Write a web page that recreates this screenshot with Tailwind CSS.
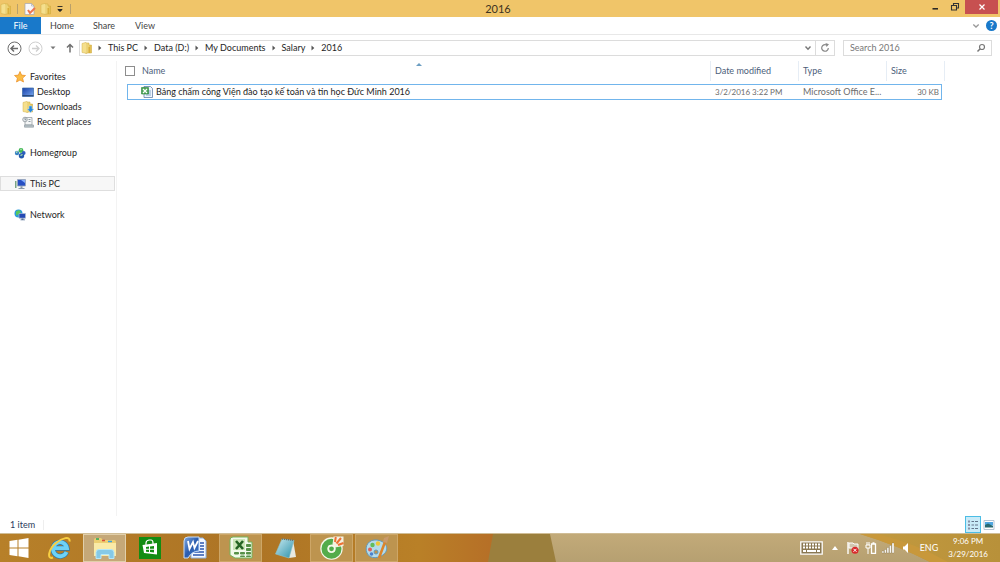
<!DOCTYPE html>
<html lang="en">
<head>
<meta charset="utf-8">
<meta name="viewport" content="width=device-width, initial-scale=1">
<title>2016</title>
<script src="https://cdn.jsdelivr.net/npm/@tailwindcss/browser@4"></script>
</head>
<body class="flex h-screen flex-col overflow-hidden bg-white font-[Lato,'Noto_Sans',sans-serif] text-[9px] leading-3 text-[#1e1e1e]">
<svg class="absolute size-0" aria-hidden="true">
  <defs>
    <linearGradient id="gold" x1="0" x2="1"><stop offset="0" stop-color="#fff2ae"/><stop offset="1" stop-color="#dfb844"/></linearGradient>
    <linearGradient id="screen" x1="0" y1="0" x2="1" y2="1"><stop offset="0" stop-color="#173fa9"/><stop offset="1" stop-color="#79a9ef"/></linearGradient>
    <linearGradient id="note" x1="0" y1="0" x2="1" y2="1"><stop offset="0" stop-color="#c8eaf0"/><stop offset="1" stop-color="#2c91aa"/></linearGradient>
    <linearGradient id="word" x1="0" y1="0" x2="1" y2="1"><stop offset="0" stop-color="#7fa8e0"/><stop offset=".5" stop-color="#2a5cae"/><stop offset="1" stop-color="#3f7ad0"/></linearGradient>
  </defs>
  <symbol id="folder" viewBox="0 0 12 12"><path d="M4 1h4v2h2.500v8H4z" fill="url(#gold)" stroke="#cfa83d" stroke-width=".5"/><path d="M1 1.500L4.500.500 6 1.500v10l-5-1z" fill="#f5df8d" stroke="#d3b04a" stroke-width=".5"/><path d="M7.500 5h1.500v6H7.500z" fill="#d9ae3b"/></symbol>
  <symbol id="crumb" viewBox="0 0 4 6"><path d="M.5.5L3.300 3 .5 5.500z" fill="#555"/></symbol>
</svg>

<header class="flex h-[17px] shrink-0 items-center justify-between bg-[#f0c569]">
  <div class="flex items-center">
    <svg class="size-3" role="img" aria-label="Folder"><use href="#folder"/></svg>
    <span class="ml-[5px] h-2.5 w-px bg-[#b9a06b]"></span>
    <button aria-label="Properties" class="ml-1.5"><svg class="size-3" viewBox="0 0 12 12"><path d="M1 .5h6.500L10 3v8.500H1z" fill="#f8f8fa" stroke="#a5a5ad" stroke-width=".7"/><path d="M7.500.5V3H10" fill="none" stroke="#a5a5ad" stroke-width=".6"/><path d="M4 7l2 3 5-5" fill="none" stroke="#ec7650" stroke-width="2"/></svg></button>
    <button aria-label="New folder" class="ml-1"><svg class="size-3"><use href="#folder"/></svg></button>
    <button aria-label="Customize toolbar" class="ml-1"><svg class="size-2" viewBox="0 0 8 8"><path d="M1.500 1.500h5M1.800 4.500h4.400L4 6.500z" fill="#222" stroke="#222" stroke-width=".9"/></svg></button>
    <span class="ml-1.5 h-2.5 w-px bg-[#b9a06b]"></span>
  </div>
  <h1 class="flex-1 text-center text-[11px] leading-4 text-[#3d3321]">2016</h1>
  <div class="flex h-full items-start pr-0.5">
    <button aria-label="Minimize" class="h-3.5 w-5"><svg class="mx-auto h-3.5 w-2" viewBox="0 0 8 14"><path d="M1.500 8.800h5.500" stroke="#222" stroke-width="1.500"/></svg></button>
    <button aria-label="Restore" class="h-3.5 w-5"><svg class="mx-auto h-3.5 w-2.5" viewBox="0 0 10 14"><path d="M3.500 5V3.500h5v4.500H7M1.500 5.500h5v4.500h-5z" fill="none" stroke="#333" stroke-width="1.100"/></svg></button>
    <button aria-label="Close" class="h-3.5 w-[33px] bg-[#c75050]"><svg class="mx-auto h-3.5 w-2.5" viewBox="0 0 10 14"><path d="M2.500 4.500l5 5m0-5l-5 5" stroke="#fff" stroke-width="1.200"/></svg></button>
  </div>
</header>

<nav aria-label="Ribbon" class="flex h-[18px] shrink-0 items-center border-b border-[#e8e8e8] text-[#444]">
  <button class="h-[17px] w-[41px] bg-[#1979ca] text-white">File</button>
  <button class="w-[42px]">Home</button>
  <button class="w-[42px]">Share</button>
  <button class="w-10">View</button>
  <button aria-label="Expand ribbon" class="ml-auto"><svg class="size-2" viewBox="0 0 8 8"><path d="M1.300 2.500L4 5l2.700-2.500" fill="none" stroke="#999" stroke-width="1.300"/></svg></button>
  <button aria-label="Help" class="mr-[3px] ml-1.5 size-[11px] rounded-full bg-[#1979ca] text-[9px] leading-[11px] font-bold text-white">?</button>
</nav>

<div class="flex h-[26px] shrink-0 items-center pr-2 pl-[7px]">
  <button aria-label="Back"><svg class="size-[15px]" viewBox="0 0 15 15" fill="none" stroke="#6c6c6c"><circle cx="7.500" cy="7.500" r="6.500"/><path d="M11 7.500H4.500M7 4.500l-3 3 3 3" stroke-width="1.500"/></svg></button>
  <button aria-label="Forward" class="ml-1.5"><svg class="size-[15px]" viewBox="0 0 15 15" fill="none" stroke="#cfcfcf"><circle cx="7.500" cy="7.500" r="6.500"/><path d="M4 7.500h6.500M8 4.500l3 3-3 3" stroke-width="1.300"/></svg></button>
  <button aria-label="Recent locations" class="ml-1.5"><svg class="size-2" viewBox="0 0 8 8"><path d="M1.500 2.500h5L4 5.300z" fill="#777"/></svg></button>
  <button aria-label="Up" class="ml-2"><svg class="h-3 w-2.5" viewBox="0 0 10 12"><path d="M5 10.500V3M2 5.500l3-3 3 3" fill="none" stroke="#707070" stroke-width="1.500"/></svg></button>
  <div class="ml-1 flex h-4 flex-1 items-center border border-[#dcdcdc] pl-px">
    <svg class="size-3"><use href="#folder"/></svg>
    <nav aria-label="Path" class="ml-[5px] flex items-center gap-1.5 whitespace-nowrap">
      <svg class="h-1.5 w-1"><use href="#crumb"/></svg><a href="#">This PC</a>
      <svg class="h-1.5 w-1"><use href="#crumb"/></svg><a href="#">Data (D:)</a>
      <svg class="h-1.5 w-1"><use href="#crumb"/></svg><a href="#">My Documents</a>
      <svg class="h-1.5 w-1"><use href="#crumb"/></svg><a href="#">Salary</a>
      <svg class="h-1.5 w-1"><use href="#crumb"/></svg><a href="#">2016</a>
    </nav>
    <button aria-label="Previous locations" class="mr-[3px] ml-auto"><svg class="size-2" viewBox="0 0 8 8"><path d="M1.500 2.500L4 5.200l2.500-2.700" fill="none" stroke="#777" stroke-width="1.400"/></svg></button>
    <button aria-label="Refresh" class="flex h-full w-[19px] items-center justify-center border-l border-[#dcdcdc]"><svg class="size-2.5" viewBox="0 0 10 10"><path d="M8.300 5A3.300 3.300 0 1 1 6.500 2" fill="none" stroke="#888" stroke-width="1.200"/><path d="M5.500 0L9 1.300 6.500 4z" fill="#888"/></svg></button>
  </div>
  <label class="ml-2 flex h-4 w-[149px] items-center border border-[#dcdcdc] pr-[5px] pl-1.5">
    <input type="search" aria-label="Search 2016" placeholder="Search 2016" class="w-0 flex-1 outline-none placeholder:text-[#777]">
    <svg class="size-2.5" viewBox="0 0 10 10" fill="none" stroke="#777"><circle cx="6" cy="4" r="2.500" stroke-width="1.200"/><path d="M4.200 5.800L1.500 8.500" stroke-width="1.500"/></svg>
  </label>
</div>

<div class="flex min-h-0 flex-1">
  <nav aria-label="Folders" class="flex w-[117px] shrink-0 flex-col gap-4 border-r border-[#f3f3f3] pt-2 pr-px">
    <ul>
      <li><a href="#" class="flex h-[15px] items-center gap-1 pl-3.5"><svg class="size-3" viewBox="0 0 12 12"><path d="M6 .5l1.600 3.600 3.900.4-2.900 2.600.9 3.900L6 9l-3.500 2 .9-3.900L.5 4.500l3.900-.4z" fill="#fcbd45" stroke="#e98a1f" stroke-width=".7"/></svg>Favorites</a></li>
      <li><a href="#" class="flex h-[15px] items-center gap-[3px] pl-[22px]"><svg class="size-3" viewBox="0 0 12 12"><path d="M.5 2h11v8.500H.5z" fill="url(#screen)" stroke="#3668a5" stroke-width=".7"/><path d="M.5 9.700h11" stroke="#233e69"/></svg>Desktop</a></li>
      <li><a href="#" class="flex h-[15px] items-center gap-[3px] pl-[22px]"><svg class="size-3" viewBox="0 0 12 12"><use href="#folder"/><path d="M7 5h3v3h1.800L8.500 11.500 5.200 8H7z" fill="#2988dc" stroke="#a6d5f7" stroke-width=".5"/></svg>Downloads</a></li>
      <li><a href="#" class="flex h-[15px] items-center gap-[3px] pl-[22px]"><svg class="size-3" viewBox="0 0 12 12"><path d="M3 1.500h7v7.500H3z" fill="#f4f6f7" stroke="#8b9499" stroke-width=".7"/><circle cx="3" cy="3.500" r="2.300" fill="#e5e9eb" stroke="#848d92" stroke-width=".7"/><path d="M3 2v1.700h1.300M6.500 3.500h2m-2 2h2" stroke="#657780" stroke-width=".7" fill="none"/><path d="M2.500 9h9v2.200h-9z" fill="#b8c3c8" stroke="#849198" stroke-width=".6"/></svg>Recent places</a></li>
    </ul>
    <a href="#" class="flex h-[15px] items-center gap-1 pl-3.5"><svg class="size-3" viewBox="0 0 12 12"><circle cx="3" cy="6" r="2.200" fill="#3a83c3"/><circle cx="7" cy="3.500" r="2.400" fill="#3fb655"/><circle cx="9.700" cy="6" r="1.900" fill="#2d5dc1"/><circle cx="7.500" cy="8.700" r="2.700" fill="#2459ae"/><path d="M2 5.500l1.500-1M6.500 3l1-1M6.500 8.500l2-1" stroke="#b7ecb3" stroke-width="1.200" fill="none"/></svg>Homegroup</a>
    <a href="#" aria-current="page" class="flex h-[15px] items-center gap-1 border border-[#dedede] bg-[#f7f7f7] pl-[13px]"><svg class="size-3" viewBox="0 0 12 12"><path d="M1 3h1.500v7H1z" fill="#79a484"/><path d="M3.500 1.500h8v6.500h-8z" fill="#274fc3" stroke="#9ba8bb" stroke-width=".8"/><path d="M7 2h4v3z" fill="#85afff"/><path d="M6.500 8.200h2V10h2v1h-6v-1h2z" fill="#8a99a9"/></svg>This PC</a>
    <a href="#" class="flex h-[15px] items-center gap-1 pl-3.5"><svg class="size-3" viewBox="0 0 12 12"><circle cx="4.500" cy="4.500" r="4" fill="#2a9bdc"/><path d="M2 2.500l3-1.500 2 2-2 2-3 1.500z" fill="#58c85c"/><path d="M5 4.500h6.500v4.700H5z" fill="#2349b5" stroke="#adbbd0" stroke-width=".7"/><path d="M7.500 9.500h2v1H11v.8H6.500v-.8h1z" fill="#557099"/></svg>Network</a>
  </nav>

  <main class="min-w-0 flex-1 pr-[55px] pl-2.5">
    <table class="w-full table-fixed border-separate border-spacing-0 text-left whitespace-nowrap">
      <colgroup><col><col class="w-[88px]"><col class="w-[88px]"><col class="w-[55px]"><col class="w-[3px]"></colgroup>
      <thead class="text-[#4c607a]">
        <tr class="h-5">
          <th class="relative border-r border-[#e6edf5] p-0 font-normal">
            <div class="flex items-center"><input type="checkbox" aria-label="Select all" class="mr-[7px] -ml-0.5 size-[10px] appearance-none border border-[#8d8d8d]">Name</div>
            <svg class="absolute top-0.5 left-1/2 h-[3px] w-1.5 -translate-x-1/2" viewBox="0 0 6 3" role="img" aria-label="Sorted ascending"><path d="M3 0l3 3H0z" fill="#6c9ec2"/></svg>
          </th>
          <th class="border-r border-[#e6edf5] p-0 pl-1 font-normal">Date modified</th>
          <th class="border-r border-[#e6edf5] p-0 pl-1 font-normal">Type</th>
          <th class="p-0 pl-1 font-normal">Size</th>
          <td class="border-r border-[#e6edf5] p-0"></td>
        </tr>
      </thead>
      <tbody class="text-[#6d6d6d]">
        <tr aria-hidden="true" class="h-[3px]"><td colspan="5" class="p-0"></td></tr>
        <tr class="h-4">
          <td class="border-y border-l border-[#71b5ec] p-0 pl-[13px] text-[#1e1e1e]"><div class="flex items-center gap-[3px]"><svg class="size-3 shrink-0" viewBox="0 0 12 12"><path d="M3 .5h6.500l2 2v9H3z" fill="#eef5fd" stroke="#6580a6" stroke-width=".8"/><path d="M7 5h3m-3 2h3M5 9h5" stroke="#6d95bd" stroke-width=".8"/><path d="M.5 1.500h7V8h-7z" fill="#4ca456" stroke="#29813b" stroke-width=".6"/><path d="M2 3l4 4m0-4L2 7" stroke="#fff" stroke-width="1.200"/></svg>Bảng chấm công Viện đào tạo kế toán và tin học Đức Minh 2016</div></td>
          <td class="border-y border-[#71b5ec] p-0 pl-1 text-[8px]">3/2/2016 3:22 PM</td>
          <td class="border-y border-[#71b5ec] p-0 pl-1">Microsoft Office E...</td>
          <td class="border-y border-r border-[#71b5ec] p-0 pr-0.5 text-right text-[8px]">30 KB</td>
        </tr>
      </tbody>
    </table>
  </main>
</div>

<footer class="flex h-[17px] shrink-0 items-center pr-1 pl-2.5 text-[#2b3b5c]">
  <span>1 item</span><span class="ml-2 h-2.5 w-px bg-[#eee]"></span>
  <button aria-label="Details view" class="ml-auto flex h-[17px] w-4 items-center justify-center border border-[#4cbde5] bg-[#c9ebf8]"><svg class="size-3" viewBox="0 0 12 12"><path d="M1 2.500h2M1 6h2M1 9.500h2" stroke="#8b93a8" stroke-width="2"/><path d="M4.500 2.500H7m1 0h3M4.500 6H7m1 0h3M4.500 9.500H7m1 0h3" stroke="#64758b"/></svg></button>
  <button aria-label="Large icons view" class="ml-px"><svg class="h-3 w-3.5" viewBox="0 0 14 12"><path d="M2 1.500h10v9H2z" fill="#fff" stroke="#b4c4d3"/><path d="M3 3h8v3.500H3z" fill="#4fa6e0"/><path d="M3 6l3-1.500L11 7v1.500H3z" fill="#286970"/></svg></button>
</footer>

<div role="toolbar" aria-label="Taskbar" class="relative flex h-[29px] shrink-0 items-center overflow-hidden border-t border-[#d0bd96] bg-[#bda674] text-white">
  <svg class="absolute inset-0 size-full" viewBox="0 0 1000 29" preserveAspectRatio="none" aria-hidden="true">
    <defs>
      <linearGradient id="wood"><stop offset="0" stop-color="#b78029"/><stop offset=".5" stop-color="#ad7425"/><stop offset=".85" stop-color="#b98027"/><stop offset="1" stop-color="#b66f27"/></linearGradient>
      <linearGradient id="sand" x2="0" y2="1"><stop offset="0" stop-color="#c2aa79"/><stop offset="1" stop-color="#b6a071"/></linearGradient>
      <linearGradient id="amber"><stop offset="0" stop-color="#c39a3f"/><stop offset="1" stop-color="#b8913a"/></linearGradient>
    </defs>
    <path d="M0 0h1000v29H0z" fill="url(#sand)"/>
    <path d="M488 0h62l6 29h-70z" fill="#9b7f3d"/>
    <path d="M0 0h493l-5 29H0z" fill="url(#wood)"/>
    <path d="M860 0h140v29h-70q-32-17-70-29z" fill="url(#amber)"/>
    <path d="M860 0h18q38 10 70 29h-18q-32-17-70-29z" fill="#c8983b"/>
  </svg>
  <div class="relative flex h-full items-center gap-0.5">
    <button aria-label="Start" class="flex h-full w-[37px] items-center justify-center"><svg class="size-5" viewBox="0 0 20 20" fill="#fff"><path d="M.5 3l8-1.200v7.700h-8zM9.500 1.700L19.500 0v9.500h-10zM.5 10.500h8v7.700l-8-1.200zM9.500 10.500h10V20l-10-1.700z"/></svg></button>
    <button aria-label="Internet Explorer" class="flex h-full w-[42px] items-center justify-center"><svg class="size-6" viewBox="0 0 24 24"><path d="M18.500 16a7 7 0 1 1 .5-3.800H7" fill="none" stroke="#1f78b4" stroke-width="5"/><path d="M18.500 16a7 7 0 1 1 .5-3.800H7" fill="none" stroke="#6fd2f5" stroke-width="3.800"/><path d="M5 21.500C-1.500 24 .5 13 8 7 14 2 22.500-.5 21.500 5.500" fill="none" stroke="#f8cf42" stroke-width="2"/></svg></button>
    <button aria-label="File Explorer" class="flex h-full w-[43px] items-center justify-center border border-[#e1cfaa] bg-[#c5a878]"><svg class="size-6" viewBox="0 0 24 24"><path d="M1 4q0-2 2-2h5l2 2h11q2 0 2 2v14H1z" fill="#edcf72"/><path d="M3 3h3" stroke="#27a75a" stroke-width="1.500"/><path d="M9 4.500h3" stroke="#d94f3b" stroke-width="1.500"/><path d="M15 5.500h4" stroke="#3ca1df" stroke-width="1.500"/><path d="M1 7h22v13H1z" fill="#faeaa7"/><path d="M3 22.500v-6q0-3 3-3h12q3 0 3 3v6h-5v-4H8v4z" fill="#85c9e7" stroke="#b8e7f7"/></svg></button>
    <button aria-label="Store" class="flex h-full w-[43px] items-center justify-center"><svg class="size-[22px]" viewBox="0 0 22 22"><path d="M0 0h22v22H0z" fill="#128c13"/><path d="M3.500 8L18 6v11.500L5 16z" fill="#fff"/><path d="M7 8V6q0-2.500 3-3h2q2 0 2 3v1" fill="none" stroke="#fff" stroke-width="1.200"/><path d="M7 10l3-.5v2.300H7zm4-.6l4-.5v2.900h-4zM7 12.700h3V15l-3-.3zm4 0h4v2.800l-4-.4z" fill="#128c13"/></svg></button>
    <button aria-label="Word" class="flex h-full w-[44px] items-center justify-center"><svg class="size-6" viewBox="0 0 24 24"><path d="M8 2h12l3 3v17H8z" fill="#f3f8ff" stroke="#8fb0de"/><path d="M17 7h4m-4 3h4m-4 3h4M10 16h11m-11 3h11" stroke="#2d56ae" stroke-width="1.500"/><path d="M1 5q0-4 4-4h11v14q-7 0-11 7H1z" fill="url(#word)" stroke="#c8def8"/><path d="M5 5l1.500 8L10 6l1.500 6L15 5" fill="none" stroke="#fff" stroke-width="1.800"/></svg></button>
    <button aria-label="Excel" class="flex h-full w-[43px] items-center justify-center border border-[#cda667] bg-[#bd944f]"><svg class="size-6" viewBox="0 0 24 24"><path d="M1 4q0-3 3-3h15v5h4v16H6L1 19z" fill="#f2faec" stroke="#75b45c"/><path d="M4 3h12v11H4z" fill="#cce7b9"/><path d="M7 5l7 8m0-8l-7 8" stroke="#256524" stroke-width="2.600"/><path d="M17.500 8.500h4v2h-4zm0 4h4v2h-4zM5.500 16.500h4v1.500h-4zm6 0h4v1.500h-4zm6 0h4v1.500h-4zM11.500 20h4v.5h-4zm6 0h4v.5h-4z" fill="#579148" stroke="#579148"/></svg></button>
    <button aria-label="Notepad" class="flex h-full w-[44px] items-center justify-center"><svg class="size-[22px]" viewBox="0 0 22 22"><path d="M18 3l3 17-7 1z" fill="#e8e9e1"/><path d="M7 2l12 1.500L14 21 .5 17z" fill="url(#note)" stroke="#8ac4ce" stroke-width=".6"/><path d="M7 2l12 1.500" stroke="#606e70" stroke-width="1.500" stroke-dasharray="1 1"/></svg></button>
    <button aria-label="Cốc Cốc" class="flex h-full w-[43px] items-center justify-center border border-[#cda667] bg-[#bd944f]"><svg class="size-6" viewBox="0 0 24 24"><circle cx="11.500" cy="12.500" r="11.200" fill="#f4f8e9"/><circle cx="11.500" cy="12.800" r="7" fill="none" stroke="#53ac4b" stroke-width="6"/><path d="M12 12L13.500.5H23.500V10z" fill="#f4f0df"/><path d="M15 6l.8-5m.7 6.500L21 2m-3 7l5.500-2" stroke="#ee7134" stroke-width="2"/><circle cx="11.500" cy="12.800" r="4" fill="#f4f8e9"/><circle cx="11.500" cy="12.800" r="2.400" fill="#53ac4b"/></svg></button>
    <button aria-label="Paint" class="flex h-full w-[43px] items-center justify-center border border-[#cda667] bg-[#bd944f]"><svg class="size-6" viewBox="0 0 24 24"><path d="M12 4C4 3-1 10 2 17c3 7 13 5 17 1 4-3 5-12-7-14zM11 18a2 2 0 1 1 0-4 2 2 0 0 1 0 4z" fill="#b4dbea" fill-rule="evenodd" stroke="#6299bb"/><circle cx="5" cy="13.500" r="2" fill="#df6259"/><circle cx="7.500" cy="9" r="2.200" fill="#62bd5c"/><circle cx="13" cy="7.500" r="2.200" fill="#efc739"/><circle cx="6.500" cy="18" r="1.800" fill="#4b81cd"/><path d="M20 6l-6 16" stroke="#dc842a" stroke-width="2.500"/><path d="M18 6l1-4 5-2-2 7z" fill="#c99a6b"/></svg></button>
  </div>
  <div class="relative ml-auto flex items-center pr-3">
    <button aria-label="Touch keyboard"><svg class="h-3.5 w-[23px]" viewBox="0 0 23 14"><path d="M.8.800h21.400v12.400H.8z" fill="#8a7852" stroke="#fff" stroke-width="1.300"/><path d="M3 3.500h17M3 6.500h17" stroke="#fff" stroke-width="2" stroke-dasharray="2 1"/><path d="M3 10h3m1 0h9m1 0h3" stroke="#fff" stroke-width="2"/></svg></button>
    <button aria-label="Show hidden icons" class="ml-[9px]"><svg class="h-1 w-1.5" viewBox="0 0 6 4"><path d="M3 0l3 4H0z" fill="#fff"/></svg></button>
    <button aria-label="Action Center" class="ml-[9px]"><svg class="size-3" viewBox="0 0 12 12"><path d="M1 0v12" stroke="#fff" stroke-width="1.400"/><path d="M2 1h4l1 1h4v5H7L6 6H2z" fill="#d1c6ae" stroke="#fff"/><circle cx="8" cy="8.300" r="3.500" fill="#d9292c"/><path d="M6.500 6.800l3 3m0-3l-3 3" stroke="#fff"/></svg></button>
    <button aria-label="Power" class="ml-1.5"><svg class="h-3 w-3" viewBox="0 0 12 12" fill="none" stroke="#fff"><path d="M1 3h4v3H1zM2 0v3m2-3v3M3 6v6"/><path d="M6.500 2h4v9.500h-4zM7.500 1h2" stroke-width="1.300"/></svg></button>
    <button aria-label="Network" class="ml-[5px]"><svg class="h-3 w-3" viewBox="0 0 12 12"><path d="M0 9h1.800v2H0zm2.500-1.500h1.800V11H2.500zM5 5.500h1.800V11H5zm2.500-2h1.800V11H7.500zM10 1h2v10h-2z" fill="#fff" stroke="#75643b" stroke-width=".3"/></svg></button>
    <button aria-label="Volume" class="ml-2"><svg class="h-3 w-2" viewBox="0 0 8 12"><path d="M1 4.500h1.500L6 1v10L2.500 7.500H1z" fill="#fff"/></svg></button>
    <button class="ml-2.5" aria-label="Input language">ENG</button>
    <button class="ml-2.5 text-center text-[8px] leading-[13px]">9:06 PM<br>3/29/2016</button>
  </div>
</div>
</body>
</html>
